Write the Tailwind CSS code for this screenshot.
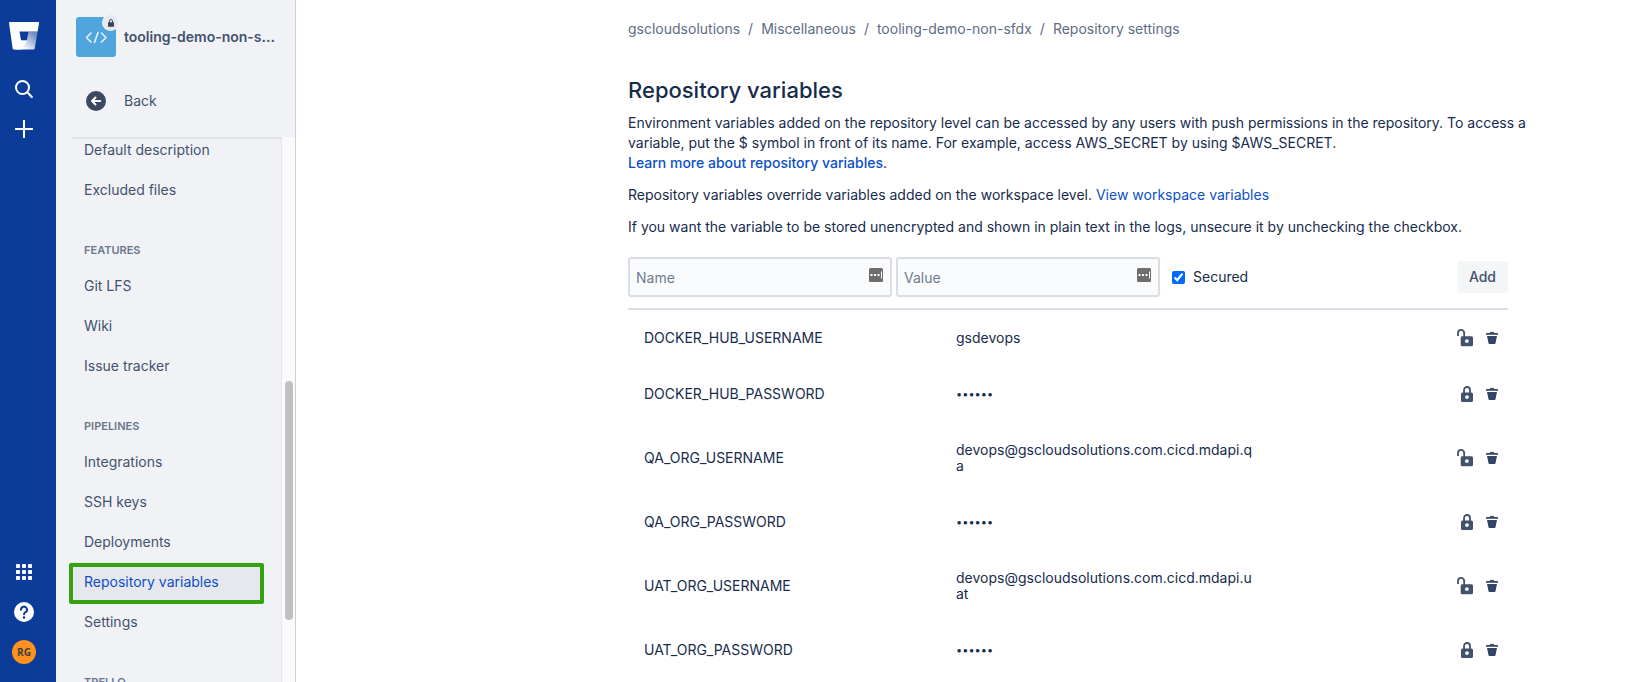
<!DOCTYPE html>
<html lang="en">
<head>
<meta charset="utf-8">
<title>Repository variables</title>
<script src="https://cdn.jsdelivr.net/npm/@tailwindcss/browser@4"></script>
</head>
<body class="bg-white font-['Inter','Liberation_Sans',sans-serif] text-sm text-[#172b4d]">
<svg class="hidden">
  <symbol id="trash" viewBox="0 0 12 12"><path fill="currentColor" d="M0 1.600Q0 1 .6 1H3.800Q4 0 4.800 0h2.400Q8 0 8.200 1h3.200q.6 0 .6.600V2.700H0zM1 4h10L9.500 11.200Q9.300 12 8.600 12H3.400Q2.700 12 2.500 11.200z"/></symbol>
  <symbol id="lock" viewBox="0 0 12 16"><path fill="none" stroke="currentColor" stroke-width="1.800" d="M3 8V4a3 3 0 0 1 6 0v4"/><path fill="currentColor" fill-rule="evenodd" d="M1.500 6.500h9A1.500 1.500 0 0 1 12 8v6.500a1.500 1.500 0 0 1-1.500 1.500h-9A1.500 1.500 0 0 1 0 14.500V8a1.500 1.500 0 0 1 1.500-1.500zM6 9.200a1.900 1.900 0 1 0 0 3.800 1.900 1.900 0 0 0 0-3.800z"/></symbol>
  <symbol id="unlock" viewBox="0 0 16 18"><path fill="none" stroke="currentColor" stroke-width="1.800" d="M1 7V4a3.100 3.100 0 0 1 6.200 0v4"/><path fill="currentColor" fill-rule="evenodd" d="M5 7.200h9.500A1.500 1.500 0 0 1 16 8.700v7a1.500 1.500 0 0 1-1.500 1.500H5.200a1.500 1.500 0 0 1-1.500-1.500v-7A1.500 1.500 0 0 1 5 7.200zM9.900 10.200a1.900 1.900 0 1 0 0 3.800 1.900 1.900 0 0 0 0-3.800z"/></symbol>
  <symbol id="fill" viewBox="0 0 14 14"><rect width="14" height="14" rx="1.500" fill="#6e6e6e"/><path fill="#fff" d="M1.500 6h2v2h-2zM5 6h2v2H5zM8.500 6h2v2h-2zM12 3.500h1v7h-1z"/></symbol>
</svg>
<div class="flex h-screen overflow-hidden">
  <nav aria-label="Global" class="flex w-14 shrink-0 flex-col items-center bg-[#0b3c9a] pt-5 pr-2 pb-[18px] text-white">
    <a href="#" aria-label="Bitbucket" class="mb-7"><svg class="h-8 w-8" viewBox="0 0 32 32">
      <defs><linearGradient id="shade" x1="1" y1="0.100" x2="0.250" y2="0.800"><stop offset="0.100" stop-color="#fff" stop-opacity=".4"/><stop offset="1" stop-color="#fff"/></linearGradient></defs>
      <path fill="#fff" d="M2 2h28.300q1 0 .8 1l-1.500 8.500H11.500l1.600 9h6.500l-6.200 9H6q-1.200 0-1.400-1.200L1 3q-.1-1 1-1z"/>
      <path fill="url(#shade)" d="M20.500 11.500h9.100l-2.800 16.800q-.2 1.200-1.400 1.200H6.500l6.600-9h5.800z"/></svg></a>
    <button aria-label="Search" class="mb-[22px]"><svg class="size-[18px]" viewBox="0 0 18 18" fill="none" stroke="currentColor" stroke-width="2"><circle cx="7.500" cy="7.500" r="6.500"/><path d="m12.300 12.300 4.500 4.700" stroke-linecap="round"/></svg></button>
    <button aria-label="Create"><svg class="size-[18px]" viewBox="0 0 18 18" fill="none" stroke="currentColor" stroke-width="2"><path d="M9 0v18M0 9h18"/></svg></button>
    <button aria-label="Switch to" class="mt-auto mb-[22px]"><svg class="size-4" viewBox="0 0 16 16" fill="currentColor"><rect width="4" height="4" rx=".8"/><rect x="6" width="4" height="4" rx=".8"/><rect x="12" width="4" height="4" rx=".8"/><rect y="6" width="4" height="4" rx=".8"/><rect x="6" y="6" width="4" height="4" rx=".8"/><rect x="12" y="6" width="4" height="4" rx=".8"/><rect y="12" width="4" height="4" rx=".8"/><rect x="6" y="12" width="4" height="4" rx=".8"/><rect x="12" y="12" width="4" height="4" rx=".8"/></svg></button>
    <button aria-label="Help" class="mb-[18px]"><svg class="size-5" viewBox="0 0 20 20"><circle cx="10" cy="10" r="10" fill="#fff"/><path fill="none" stroke="#0b3c9a" stroke-width="2" stroke-linecap="round" d="M7 7.800a3 3 0 1 1 4.600 2.400Q10 11.100 10 12.300"/><circle cx="10" cy="15.500" r="1.300" fill="#0b3c9a"/></svg></button>
    <button aria-label="Your profile" class="size-6 rounded-full bg-[#ff8f1e] font-['Open_Sans',sans-serif] text-[10px] leading-6 font-bold text-[#42423f]">RG</button>
  </nav>

  <aside class="flex w-60 shrink-0 flex-col border-r border-[#cfd0d3] bg-[#f1f2f6] text-[#42526e]">
    <div class="flex items-center gap-2 pt-[17px] pr-3 pl-5">
      <span class="relative size-10 shrink-0 rounded-[3px] bg-[#4fa5dc]">
        <svg class="size-10" viewBox="0 0 40 40" fill="none" stroke="#e6f3fb" stroke-width="1.600" stroke-linecap="round" stroke-linejoin="round"><path d="m15 16-4.500 4.500L15 25M25.500 16l4.500 4.500-4.500 4.500M22 15.500l-3.500 10"/></svg>
        <span class="absolute -top-0.5 -right-0.5 grid size-[15px] place-items-center rounded-full bg-[#e6e8ed] ring-1 ring-[#f1f2f6]"><svg class="h-2 w-1.5" viewBox="0 0 6 8"><path fill="none" stroke="#42526e" d="M1.500 4V2a1.500 1.500 0 0 1 3 0v2"/><rect y="3.200" width="6" height="4.600" rx=".6" fill="#344563"/></svg></span>
      </span>
      <a href="#" title="tooling-demo-non-sfdx" class="font-semibold whitespace-nowrap">tooling-demo-non-s...</a>
    </div>
    <a href="#" class="mt-6 flex h-10 items-center pl-[30px]">
      <svg class="mr-[18px] size-5" viewBox="0 0 20 20"><circle cx="10" cy="10" r="10" fill="#3b4861"/><path fill="none" stroke="#fff" stroke-width="2" stroke-linecap="round" stroke-linejoin="round" d="M14.200 10H6.300M9.500 6.500 6 10l3.500 3.500"/></svg>Back</a>
    <div class="mt-4 flex min-h-0 flex-1">
      <div class="ml-4 min-w-0 flex-1 overflow-hidden border-t-2 border-[#dfe1e6]">
        <div class="-mt-[9px]">
          <a href="#" class="flex h-10 items-center px-3">Default description</a>
          <a href="#" class="flex h-10 items-center px-3">Excluded files</a>
          <h2 class="mt-8 mb-2 px-3 text-[11px] leading-4 font-semibold text-[#6b778c]">FEATURES</h2>
          <a href="#" class="flex h-10 items-center px-3">Git LFS</a>
          <a href="#" class="flex h-10 items-center px-3">Wiki</a>
          <a href="#" class="flex h-10 items-center px-3">Issue tracker</a>
          <h2 class="mt-8 mb-2 px-3 text-[11px] leading-4 font-semibold text-[#6b778c]">PIPELINES</h2>
          <a href="#" class="flex h-10 items-center px-3">Integrations</a>
          <a href="#" class="flex h-10 items-center px-3">SSH keys</a>
          <a href="#" class="flex h-10 items-center px-3">Deployments</a>
          <a href="#" aria-current="page" class="mr-5 flex h-10 items-center bg-[#e7e8ee] px-3 text-[#0b4fc9]">Repository variables</a>
          <a href="#" class="flex h-10 items-center px-3">Settings</a>
          <h2 class="mt-8 mb-2 px-3 text-[11px] leading-4 font-semibold text-[#6b778c]">TRELLO</h2>
        </div>
      </div>
      <div class="w-3.5 border-l border-[#e6e6e8] bg-[#fafafa] px-[3px] pt-[244px]"><div class="h-[239px] w-2 rounded-full bg-[#c1c1c1]"></div></div>
    </div>
  </aside>
  <div class="absolute top-[563px] left-[69px] h-[41px] w-[195px] rounded-xs border-4 border-[#34a30f]"></div>

  <main class="min-w-0 flex-1 overflow-hidden pt-[19px] pr-[120px] pl-[332px]">
    <nav aria-label="Breadcrumb" class="flex gap-2 leading-5 text-[#5e6c84]">
      <a href="#">gscloudsolutions</a><span>/</span><a href="#">Miscellaneous</a><span>/</span><a href="#">tooling-demo-non-sfdx</a><span>/</span><span>Repository settings</span>
    </nav>
    <h1 class="mt-[37px] text-[22px] leading-7 font-medium">Repository variables</h1>
    <p class="-mr-8 mt-[9px] leading-5">Environment variables added on the repository level can be accessed by any users with push permissions in the repository. To access a variable, put the $ symbol in front of its name. For example, access AWS_SECRET by using $AWS_SECRET.<br><a href="#" class="font-medium text-[#0b4fc9]">Learn more about repository variables</a>.</p>
    <p class="mt-3 leading-5">Repository variables override variables added on the workspace level. <a href="#" class="text-[#0b4fc9]">View workspace variables</a></p>
    <p class="mt-3 leading-5">If you want the variable to be stored unencrypted and shown in plain text in the logs, unsecure it by unchecking the checkbox.</p>
    <form class="mt-5 flex items-center border-b-2 border-[#dadde3] pb-[11px]">
      <div class="relative mr-1 w-[30%]"><input aria-label="Name" placeholder="Name" class="h-10 w-full rounded-[3px] border-2 border-[#dadde3] bg-[#fafbfc] px-1.5 placeholder:text-[#6f7b91]"><svg class="absolute top-[11px] right-[9px] size-3.5"><use href="#fill"/></svg></div>
      <div class="relative w-[30%]"><input aria-label="Value" placeholder="Value" class="h-10 w-full rounded-[3px] border-2 border-[#dadde3] bg-[#fafbfc] px-1.5 placeholder:text-[#6f7b91]"><svg class="absolute top-[11px] right-[9px] size-3.5"><use href="#fill"/></svg></div>
      <label class="ml-3 flex items-center gap-2"><input type="checkbox" checked class="size-[13px] accent-[#006aff]">Secured</label>
      <button type="button" class="ml-auto h-8 rounded-[3px] bg-[#f4f5f7] px-3 font-medium text-[#42526e]">Add</button>
    </form>
    <table class="w-full table-fixed text-left leading-4 text-[#172b4d]">
      <colgroup><col class="w-[312px]"><col class="w-[320px]"><col></colgroup>
      <tbody>
        <tr><th scope="row" class="px-4 py-5 font-normal">DOCKER_HUB_USERNAME</th><td class="py-5 pr-1 pl-4 break-all">gsdevops</td><td class="pr-2.5"><div class="flex items-center justify-end gap-[13px] text-[#42526e]"><button aria-label="Secure variable"><svg class="h-[18px] w-4"><use href="#unlock"/></svg></button><button aria-label="Delete variable"><svg class="size-3 text-[#344563]"><use href="#trash"/></svg></button></div></td></tr>
        <tr><th scope="row" class="px-4 py-5 font-normal">DOCKER_HUB_PASSWORD</th><td class="py-5 pr-1 pl-4 text-[11px] leading-4">••••••</td><td class="pr-2.5"><div class="flex items-center justify-end gap-[13px] text-[#42526e]"><svg role="img" aria-label="Secured" class="h-4 w-3"><use href="#lock"/></svg><button aria-label="Delete variable"><svg class="size-3 text-[#344563]"><use href="#trash"/></svg></button></div></td></tr>
        <tr><th scope="row" class="px-4 py-5 font-normal">QA_ORG_USERNAME</th><td class="py-5 pr-1 pl-4 break-all">devops@gscloudsolutions.com.cicd.mdapi.qa</td><td class="pr-2.5"><div class="flex items-center justify-end gap-[13px] text-[#42526e]"><button aria-label="Secure variable"><svg class="h-[18px] w-4"><use href="#unlock"/></svg></button><button aria-label="Delete variable"><svg class="size-3 text-[#344563]"><use href="#trash"/></svg></button></div></td></tr>
        <tr><th scope="row" class="px-4 py-5 font-normal">QA_ORG_PASSWORD</th><td class="py-5 pr-1 pl-4 text-[11px] leading-4">••••••</td><td class="pr-2.5"><div class="flex items-center justify-end gap-[13px] text-[#42526e]"><svg role="img" aria-label="Secured" class="h-4 w-3"><use href="#lock"/></svg><button aria-label="Delete variable"><svg class="size-3 text-[#344563]"><use href="#trash"/></svg></button></div></td></tr>
        <tr><th scope="row" class="px-4 py-5 font-normal">UAT_ORG_USERNAME</th><td class="py-5 pr-1 pl-4 break-all">devops@gscloudsolutions.com.cicd.mdapi.uat</td><td class="pr-2.5"><div class="flex items-center justify-end gap-[13px] text-[#42526e]"><button aria-label="Secure variable"><svg class="h-[18px] w-4"><use href="#unlock"/></svg></button><button aria-label="Delete variable"><svg class="size-3 text-[#344563]"><use href="#trash"/></svg></button></div></td></tr>
        <tr><th scope="row" class="px-4 py-5 font-normal">UAT_ORG_PASSWORD</th><td class="py-5 pr-1 pl-4 text-[11px] leading-4">••••••</td><td class="pr-2.5"><div class="flex items-center justify-end gap-[13px] text-[#42526e]"><svg role="img" aria-label="Secured" class="h-4 w-3"><use href="#lock"/></svg><button aria-label="Delete variable"><svg class="size-3 text-[#344563]"><use href="#trash"/></svg></button></div></td></tr>
      </tbody>
    </table>
  </main>
</div>
</body>
</html>
